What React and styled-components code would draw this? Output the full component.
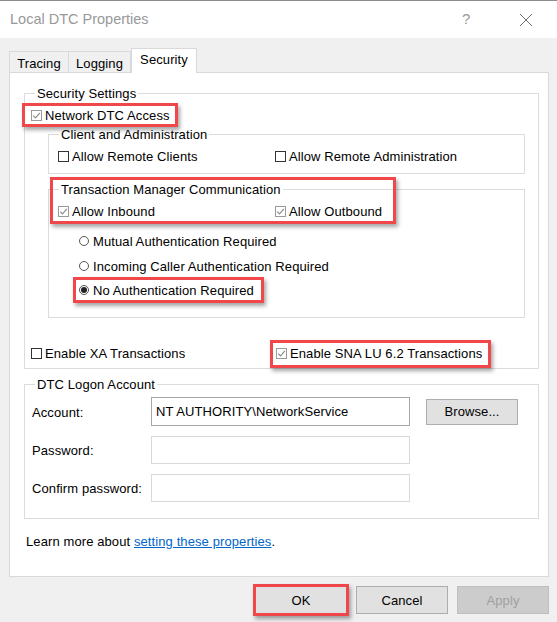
import React from 'react';
import styled, { createGlobalStyle } from 'styled-components';

const GlobalStyle = createGlobalStyle`
  html, body { margin: 0; padding: 0; background: #f0f0f0; }
  body { font-family: "Liberation Sans", Arial, sans-serif; font-size: 13px; letter-spacing: 0.1px; color: #000; }
  * { box-sizing: border-box; }
`;

const Window = styled.div`
  width: 557px;
  height: 622px;
  display: flex;
  flex-direction: column;
  background: #f0f0f0;
  border-top: 1px solid #8c8c8c;
  overflow: hidden;
`;

const TitleBar = styled.div`
  height: 37px;
  background: #fff;
  display: flex;
  align-items: center;
  padding-left: 10px;
`;

const Title = styled.div`
  flex: 1;
  font-size: 14.5px;
  letter-spacing: 0;
  color: #999;
  padding-bottom: 2px;
`;

const HelpGlyph = styled.div`
  width: 14px;
  font-size: 15px;
  color: #999;
  margin-right: 43px;
  padding-bottom: 2px;
`;

const CloseButton = styled.div`
  width: 14px;
  height: 14px;
  margin-right: 24px;
  display: flex;
`;

const Body = styled.div`
  flex: 1;
  display: flex;
  flex-direction: column;
  padding: 10px 8px 0 9px;
`;

const Tabs = styled.div`
  display: flex;
  align-items: flex-end;
  height: 25px;
  position: relative;
  z-index: 1;
`;

const Tab = styled.div`
  width: ${p => p.$w}px;
  height: ${p => (p.$active ? 25 : 22)}px;
  background: ${p => (p.$active ? '#fff' : '#f0f0f0')};
  border: 1px solid #d9d9d9;
  border-bottom: ${p => (p.$active ? 'none' : '1px solid #d9d9d9')};
  border-left: ${p => (p.$first || p.$active ? '1px solid #d9d9d9' : 'none')};
  display: flex;
  align-items: center;
  justify-content: center;
  padding-top: ${p => (p.$active ? 0 : 2)}px;
  padding-bottom: ${p => (p.$active ? 4 : 0)}px;
  color: #000;
`;

const Panel = styled.div`
  height: 505px;
  margin-top: -1px;
  background: #fff;
  border: 1px solid #d9d9d9;
  display: flex;
  flex-direction: column;
  padding: 0 9px 0 14px;
`;

const GroupBox = styled.div`
  border: 1px solid #dcdcdc;
  display: flex;
  flex-direction: column;
  margin-top: ${p => p.$mt || 0}px;
  margin-left: ${p => p.$ml || 0}px;
  margin-right: ${p => p.$mr || 0}px;
  padding: 0 0 ${p => p.$pb || 0}px ${p => p.$pl || 0}px;
`;

const Caption = styled.div`
  align-self: flex-start;
  margin-top: ${p => (p.$nested ? 0 : -8)}px;
  margin-left: ${p => (p.$indent || 10) - (p.$pl || 0)}px;
  padding: 0 2px;
  line-height: 15px;
  background: #fff;
`;

const Marked = styled.div`
  position: relative;
  align-self: flex-start;
  display: flex;
  flex-direction: column;
  margin-top: ${p => p.$mt || 0}px;
  &::after {
    content: '';
    position: absolute;
    top: ${p => p.$t}px;
    right: ${p => p.$r}px;
    bottom: ${p => p.$b}px;
    left: ${p => p.$l}px;
    border: 3px solid #f0474a;
    box-shadow: 2px 3px 4px rgba(0, 0, 0, 0.35);
    pointer-events: none;
  }
`;

const Row = styled.div`
  display: flex;
  align-items: center;
  height: 16px;
  margin-top: ${p => p.$mt || 0}px;
  margin-left: ${p => p.$ml || 0}px;
`;

const Cell = styled.div`
  width: ${p => (p.$w ? `${p.$w}px` : 'auto')};
  display: flex;
  align-items: center;
`;

const Box = styled.span`
  width: 11px;
  height: 11px;
  border: 1px solid ${p => (p.$checked ? '#9a9a9a' : '#333')};
  background: #fff;
  margin-right: 3px;
  display: inline-flex;
  align-items: center;
  justify-content: center;
  flex: none;
`;

const RadioDot = styled.span`
  width: 10px;
  height: 10px;
  border-radius: 50%;
  border: 1px solid #555;
  background: #fff;
  margin-right: 4px;
  display: inline-flex;
  align-items: center;
  justify-content: center;
  flex: none;
  &::after {
    content: '';
    width: 6px;
    height: 6px;
    border-radius: 50%;
    background: ${p => (p.$on ? '#222' : 'transparent')};
  }
`;

const FieldRow = styled.div`
  display: flex;
  align-items: center;
  margin-top: ${p => p.$mt || 0}px;
`;

const FieldLabel = styled.div`
  width: 119px;
  padding-top: 1px;
`;

const Input = styled.div`
  width: 259px;
  height: ${p => p.$h || 28}px;
  border: 1px solid ${p => (p.$enabled ? '#a6a6a6' : '#d9d9d9')};
  background: #fff;
  display: flex;
  align-items: center;
  padding-left: 4px;
`;

const Button = styled.div`
  width: 92px;
  height: ${p => p.$h || 28}px;
  background: ${p => (p.$disabled ? '#cccccc' : '#e1e1e1')};
  border: 1px solid ${p => (p.$disabled ? '#bfbfbf' : '#adadad')};
  color: ${p => (p.$disabled ? '#a0a0a0' : '#000')};
  display: flex;
  align-items: center;
  justify-content: center;
  margin-left: ${p => p.$ml || 0}px;
`;

const LearnMore = styled.div`
  margin: 15px 0 0 2px;
  line-height: 16px;
`;

const Link = styled.a`
  color: #0066cc;
  text-decoration: underline;
`;

const Footer = styled.div`
  display: flex;
  justify-content: flex-end;
  margin-top: 9px;
`;

function Check({ checked, children }) {
  return (
    <>
      <Box $checked={checked}>
        {checked && (
          <svg width="9" height="9" viewBox="0 0 9 9">
            <path d="M1.2 4.6 L3.5 6.9 L7.9 1.8" fill="none" stroke="#8a8a8a" strokeWidth="1.1" />
          </svg>
        )}
      </Box>
      <span>{children}</span>
    </>
  );
}

function Radio({ on, children }) {
  return (
    <>
      <RadioDot $on={on} />
      <span>{children}</span>
    </>
  );
}

export default function App() {
  return (
    <>
      <GlobalStyle />
      <Window>
        <TitleBar>
          <Title>Local DTC Properties</Title>
          <HelpGlyph>?</HelpGlyph>
          <CloseButton>
            <svg width="14" height="14" viewBox="0 0 14 14">
              <path d="M1 1 L13 13 M13 1 L1 13" stroke="#6f6f6f" strokeWidth="1" fill="none" />
            </svg>
          </CloseButton>
        </TitleBar>
        <Body>
          <Tabs>
            <Tab $w={60} $first>Tracing</Tab>
            <Tab $w={62}>Logging</Tab>
            <Tab $w={66} $active>Security</Tab>
          </Tabs>
          <Panel>
            <GroupBox $mt={20} $pb={7}>
              <Caption>Security Settings</Caption>
              <Marked $mt={6} $t={-4} $b={-4} $l={-9} $r={-8} style={{ marginLeft: 6 }}>
                <Row>
                  <Check checked>Network DTC Access</Check>
                </Row>
              </Marked>

              <GroupBox $mt={11} $ml={23} $mr={13} $pb={9} $pl={9}>
                <Caption $pl={9}>Client and Administration</Caption>
                <Row $mt={6}>
                  <Cell $w={217}><Check>Allow Remote Clients</Check></Cell>
                  <Cell><Check>Allow Remote Administration</Check></Cell>
                </Row>
              </GroupBox>

              <GroupBox $mt={15} $ml={23} $mr={13} $pb={19}>
                <Marked $t={-5} $b={-5} $l={1} $r={-14} style={{ marginTop: -8 }}>
                  <Caption $nested>Transaction Manager Communication</Caption>
                  <Row $mt={6} $ml={9}>
                    <Cell $w={217}><Check checked>Allow Inbound</Check></Cell>
                    <Cell><Check checked>Allow Outbound</Check></Cell>
                  </Row>
                </Marked>
                <Row $mt={14} $ml={30}>
                  <Radio>Mutual Authentication Required</Radio>
                </Row>
                <Row $mt={9} $ml={30}>
                  <Radio>Incoming Caller Authentication Required</Radio>
                </Row>
                <Marked $mt={8} $t={-5} $b={-5} $l={-6} $r={-10} style={{ marginLeft: 30 }}>
                  <Row>
                    <Radio on>No Authentication Required</Radio>
                  </Row>
                </Marked>
              </GroupBox>

              <Row $mt={27} $ml={6}>
                <Cell $w={245}><Check>Enable XA Transactions</Check></Cell>
                <Marked $t={-5} $b={-7} $l={-6} $r={-9}>
                  <Row>
                    <Check checked>Enable SNA LU 6.2 Transactions</Check>
                  </Row>
                </Marked>
              </Row>
            </GroupBox>

            <GroupBox $mt={15} $pb={16} $pl={7}>
              <Caption $pl={7}>DTC Logon Account</Caption>
              <FieldRow $mt={5}>
                <FieldLabel>Account:</FieldLabel>
                <Input $enabled $h={29}>NT AUTHORITY\NetworkService</Input>
                <Button $h={26} $ml={16}>Browse...</Button>
              </FieldRow>
              <FieldRow $mt={10}>
                <FieldLabel>Password:</FieldLabel>
                <Input />
              </FieldRow>
              <FieldRow $mt={10}>
                <FieldLabel>Confirm password:</FieldLabel>
                <Input />
              </FieldRow>
            </GroupBox>

            <LearnMore>
              Learn more about <Link>setting these properties</Link>.
            </LearnMore>
          </Panel>
          <Footer>
            <Marked $t={-2} $b={-2} $l={-2} $r={-2}>
              <Button>OK</Button>
            </Marked>
            <Button $ml={9}>Cancel</Button>
            <Button $ml={9} $disabled>Apply</Button>
          </Footer>
        </Body>
      </Window>
    </>
  );
}
